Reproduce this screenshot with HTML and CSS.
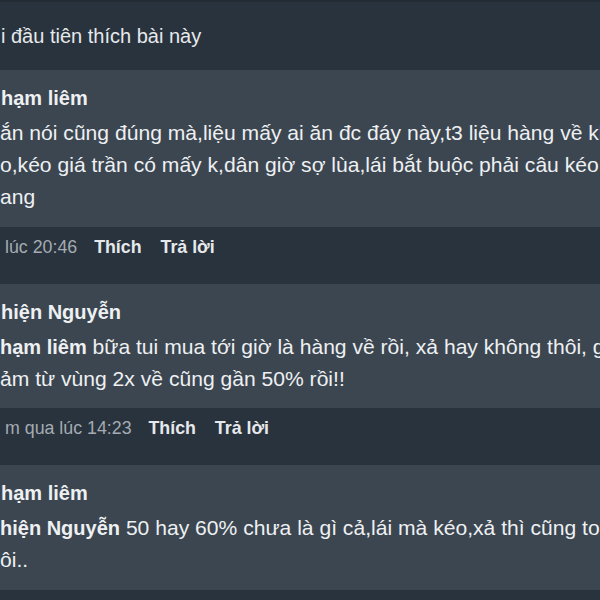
FILE: index.html
```html
<!DOCTYPE html>
<html lang="vi">
  <head>
    <meta charset="UTF-8" />
    <meta name="viewport" content="width=device-width, initial-scale=1.0" />
    <title>Bình luận</title>
    <link rel="stylesheet" href="styles.css">
  </head>
  <body>
    <div class="likes">i đầu tiên thích bài này</div>

    <div class="comment">
      <div class="comment-name">hạm liêm</div>
      <div class="comment-line">ắn nói cũng đúng mà,liệu mấy ai ăn đc đáy này,t3 liệu hàng về kho</div>
      <div class="comment-line">o,kéo giá trần có mấy k,dân giờ sợ lùa,lái bắt buộc phải câu kéo lên</div>
      <div class="comment-line">ang</div>
    </div>
    <div class="comment-meta">
      <span class="meta-time">lúc 20:46</span>
      <span class="meta-action">Thích</span>
      <span class="meta-action">Trả lời</span>
    </div>

    <div class="comment">
      <div class="comment-name">hiện Nguyễn</div>
      <div class="comment-line"><strong>hạm liêm</strong> bữa tui mua tới giờ là hàng về rồi, xả hay không thôi, giờ</div>
      <div class="comment-line">ảm từ vùng 2x về cũng gần 50% rồi!!</div>
    </div>
    <div class="comment-meta">
      <span class="meta-time">m qua lúc 14:23</span>
      <span class="meta-action">Thích</span>
      <span class="meta-action">Trả lời</span>
    </div>

    <div class="comment">
      <div class="comment-name">hạm liêm</div>
      <div class="comment-line"><strong>hiện Nguyễn</strong> 50 hay 60% chưa là gì cả,lái mà kéo,xả thì cũng toang</div>
      <div class="comment-line">ôi..</div>
    </div>
    <div class="comment-meta"></div>
  </body>
</html>
```

FILE: styles.css
```css
body {
  font-family: "Liberation Sans", Arial, sans-serif;
  margin: 0;
  background-color: #29333d;
  color: #eef0f2;
  overflow: hidden;
}

.likes {
  border-top: 2px solid #232c35;
  padding: 18px 0 18px 1px;
  font-size: 20px;
  line-height: 32px;
  color: #e6e9ec;
  white-space: nowrap;
}

.comment {
  background-color: #3b4651;
  padding: 12px 0 13.5px 0;
  font-size: 20px;
  line-height: 32px;
}

.comment-name {
  font-weight: bold;
  padding-left: 1px;
  margin-bottom: 3px;
}

.comment-line {
  font-size: 21.1px;
  white-space: nowrap;
  overflow: hidden;
}

strong {
  font-size: 20px;
  font-weight: bold;
}

.comment-meta {
  padding: 8px 0 0 5px;
  height: 24px;
  margin-bottom: 25px;
  font-size: 17.8px;
  line-height: 24px;
  white-space: nowrap;
}

.meta-time {
  color: #a4abb2;
  margin-right: 12px;
}

.meta-action {
  color: #e6e9ec;
  font-weight: bold;
  margin-right: 14px;
}
```
